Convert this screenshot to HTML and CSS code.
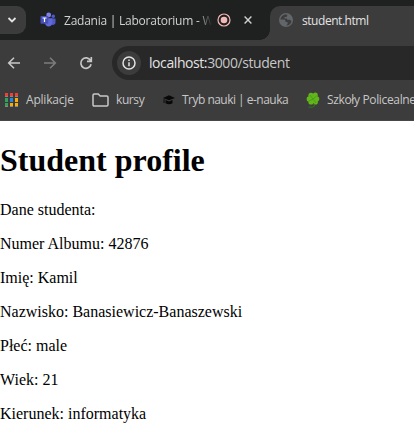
FILE: index.html
```html
<!DOCTYPE html>
<html lang="pl">
<head>
<meta charset="utf-8">
<title>student.html</title>
<link rel="stylesheet" href="styles.css">
</head>
<body>
<header class="browser">
  <div class="tabs">
    <div class="tab-search">
      <svg width="10" height="8" viewBox="0 0 10 8"><path d="M1.500 2 5 5.500 8.500 2" fill="none" stroke="#e3e3e3" stroke-width="1.800"/></svg>
    </div>
    <div class="tab tab-idle">
      <svg class="teams" width="16" height="16" viewBox="0 0 16 16">
        <circle cx="13.300" cy="4.300" r="1.700" fill="#5059c9"/><path d="M11 6.500h4.500v4a2.500 2.500 0 0 1-4.500 1.500z" fill="#5059c9"/>
        <circle cx="8.700" cy="3" r="2.400" fill="#7b83eb"/><path d="M5 6.300h7.300v5a3.700 3.700 0 0 1-7.300 0z" fill="#6169d8"/>
        <rect x="0.500" y="4" width="7.800" height="7.800" rx=".8" fill="#4650b8"/><path d="M2.500 6h4M4.500 6v4" stroke="#fff" stroke-width="1.200"/>
      </svg>
      <span class="tab-title fade">Zadania | Laboratorium - Wz</span>
      <svg class="record" width="14" height="14" viewBox="0 0 14 14"><circle cx="7" cy="7" r="6" fill="none" stroke="#f2b8b5" stroke-width="1.200"/><circle cx="7" cy="7" r="3.300" fill="#f2b8b5"/></svg>
      <svg class="close" width="8" height="8" viewBox="0 0 8 8"><path d="M.6.6l6.800 6.800M7.400.6.6 7.400" stroke="#d0d0d0" stroke-width="1.400"/></svg>
    </div>
    <div class="tab tab-active">
      <svg class="globe" width="14" height="14" viewBox="0 0 14 14"><circle cx="7" cy="7" r="7" fill="#62666a"/><path d="M8 1.500C4 1 2 3.500 1.500 6.500h3c1.300 0 2 .7 2 1.500v1h2v2l-1.300 1.500c3.200 0 5-2 5.300-4.500l-1.500-1.200H8.500L7.700 5.500H5.500V4H7c1 0 1.500-.8 1-2.500z" fill="#3c3c3c"/></svg>
      <span class="tab-title">student.html</span>
    </div>
  </div>
  <div class="toolbar">
    <svg class="nav" width="14" height="14" viewBox="0 0 14 14"><path d="M13 7H2M7 1.700 1.700 7 7 12.300" fill="none" stroke="#c7c7c7" stroke-width="1.600"/></svg>
    <svg class="nav" width="14" height="14" viewBox="0 0 14 14"><path d="M1 7h11M7 1.700 12.300 7 7 12.300" fill="none" stroke="#7c7c7c" stroke-width="1.600"/></svg>
    <svg class="nav" width="14" height="14" viewBox="0 0 14 14"><path d="M11.500 4.400A5.200 5.200 0 1 0 12.100 8.300M12.300 1v4.300H8" fill="none" stroke="#c7c7c7" stroke-width="1.700"/></svg>
    <div class="address">
      <span class="info"><svg width="14" height="14" viewBox="0 0 14 14"><circle cx="7" cy="7" r="6" fill="none" stroke="#e3e3e3" stroke-width="1.500"/><path d="M7 6.200v4M7 3.600v1.500" stroke="#e3e3e3" stroke-width="1.500"/></svg></span>
      <span class="url">localhost:<span class="path">3000/student</span></span>
    </div>
  </div>
  <nav class="bookmarks">
    <svg class="apps" width="13" height="14" viewBox="0 0 13 14">
      <path d="M0 0h3v3H0zM5 0h3v3H5zM10 0h3v3h-3z" fill="#ee3e37"/>
      <path d="M0 5h3v4H0zM0 10h3v3H0z" fill="#34a05a"/><path d="M5 5h3v4H5z" fill="#1e88e5"/><path d="M10 5h3v4h-3zM5 10h3v3H5zM10 10h3v3h-3z" fill="#f6ad0b"/>
      <path d="M0 3.500h3M5 3.500h3M10 3.500h3M0 13.500h3M5 13.500h3M10 13.500h3" stroke="#888"/>
    </svg>
    <span class="label apps-label">Aplikacje</span>
    <svg class="folder" width="17" height="14" viewBox="0 0 17 14"><path d="M1 2.200Q1 1 2.200 1h4l2 2h6.600Q16 3 16 4.200v7.600q0 1.200-1.200 1.200H2.200Q1 13 1 11.800z" fill="none" stroke="#c7c7c7" stroke-width="1.500"/></svg>
    <span class="label courses-label">kursy</span>
    <svg class="cap" width="12" height="10" viewBox="0 0 12 10"><path d="M0 3 6 .3 12 3 6 5.300z" fill="#080808"/><path d="M2.500 5 6 6.500 9.500 5v3.300Q6 10.300 2.500 8.300zM.7 3.500h.8v4.500H.5z" fill="#080808"/></svg>
    <span class="label learn-label">Tryb nauki | e-nauka</span>
    <svg class="clover" width="14" height="16" viewBox="0 0 14 16"><g fill="#62b51b"><circle cx="5" cy="3.300" r="2.600"/><circle cx="9.300" cy="3" r="2.500"/><circle cx="3.300" cy="7" r="2.700"/><circle cx="10.700" cy="6.800" r="2.600"/><circle cx="5" cy="10" r="2.600"/><circle cx="9.300" cy="10" r="2.600"/><circle cx="7" cy="6.700" r="3"/></g><path d="M7 7 4 3M7 7l3.500-3M7 7l-4 2M7 7l3 4" stroke="#429510" stroke-width=".7"/><path d="M2.500 15Q7 16 8.500 14l-1-3" fill="none" stroke="#367415" stroke-width="1"/></svg>
    <span class="label schools-label">Szkoły Policealne</span>
  </nav>
</header>
<main class="page">
  <h1>Student profile</h1>
  <p>Dane studenta:</p>
  <p>Numer Albumu: 42876</p>
  <p>Imię: Kamil</p>
  <p>Nazwisko: Banasiewicz-Banaszewski</p>
  <p>Płeć: male</p>
  <p>Wiek: 21</p>
  <p>Kierunek: informatyka</p>
</main>
</body>
</html>
```
FILE: styles.css
```css
* { box-sizing: border-box; }
body { margin: 0; overflow: hidden; background: #fff; color: #000; font: 16px/18px "Liberation Serif", serif; }
svg { display: block; flex: none; }
.browser { height: 121px; overflow: hidden; background: #3c3c3c; color: #e3e3e3; font-family: "Open Sans", sans-serif; border-bottom: 1px solid #474747; }
.tabs, .tab, .toolbar, .address, .bookmarks { display: flex; align-items: center; white-space: nowrap; }
.tabs { height: 40px; background: #1f2020; align-items: flex-end; }
.tab-search { width: 26px; height: 28px; margin-bottom: 6px; background: #3c3c3c; border-radius: 0 9px 9px 0; display: flex; align-items: center; padding-left: 7px; }
.tab { height: 34px; padding-bottom: 6px; }
.tab-idle { width: 244px; padding-left: 14px; }
.tab-title { font-size: 12px; line-height: 18px; letter-spacing: -0.45px; padding-top: 2px; }
.teams { margin-right: 8px; }
.fade { width: 149px; overflow: hidden; letter-spacing: -0.24px; color: #d2d2d2; -webkit-mask-image: linear-gradient(to right, #000 134px, transparent 148px); mask-image: linear-gradient(to right, #000 134px, transparent 148px); }
.record { margin-left: 4px; }
.close { margin-left: 13px; }
.tab-active { position: relative; width: 144px; padding-left: 9px; background: #3c3c3c; border-top-left-radius: 10px; }
.tab-active::before { content: ""; position: absolute; right: 100%; bottom: 0; width: 10px; height: 10px; background: radial-gradient(circle at 0 0, #1f2020 9.5px, #3c3c3c 10px); }
.globe { margin-right: 9px; }
.toolbar { height: 46px; padding-left: 7px; }
.nav { margin-right: 22px; }
.address { width: 310px; height: 34px; padding-left: 5px; margin-left: -3px; background: #282828; border-radius: 17px 0 0 17px; flex: none; }
.info { display: flex; align-items: center; justify-content: center; width: 24px; height: 24px; border-radius: 50%; background: #3c3c3c; }
.url { margin-left: 8px; font-size: 14px; line-height: 20px; letter-spacing: -0.42px; }
.path { color: #c7c7c7; }
.bookmarks { height: 28px; padding-left: 5px; color: #c7c7c7; }
.label { font-size: 12px; line-height: 18px; flex: none; letter-spacing: -0.3px; }
.apps { margin-right: 8px; }
.apps-label { width: 66px; letter-spacing: -0.2px; }
.folder { margin-right: 7px; }
.courses-label { width: 47px; letter-spacing: -0.4px; }
.cap { margin-right: 7px; }
.learn-label { width: 124px; letter-spacing: -0.52px; }
.clover { margin-right: 7px; }
.schools-label { letter-spacing: -0.35px; }
.page h1 { margin: 21px 0 22px; font-size: 32px; line-height: 37px; }
.page p { margin: 0 0 16px; }
```
